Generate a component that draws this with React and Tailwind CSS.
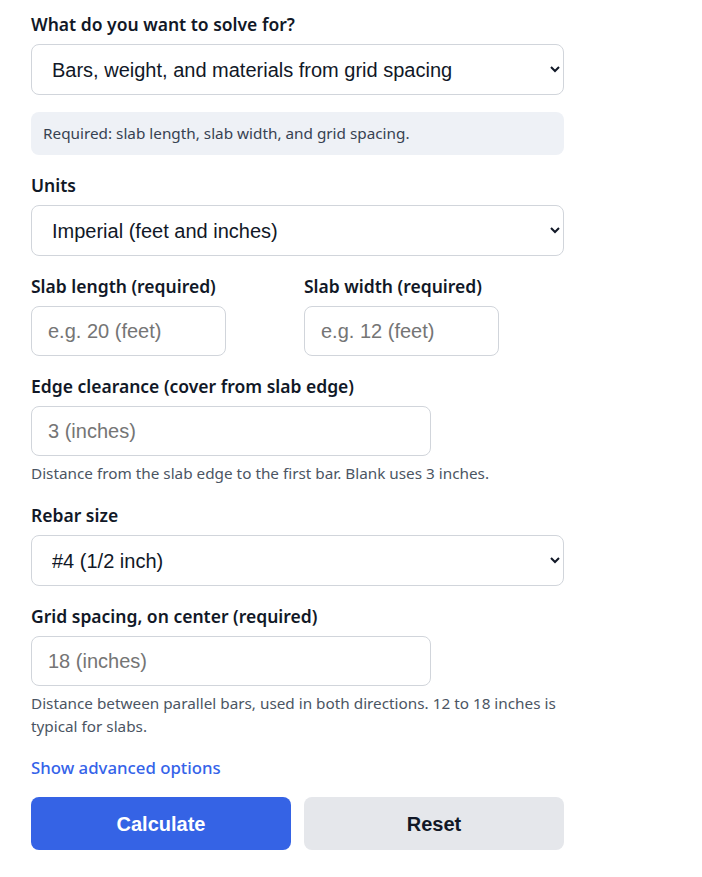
import { useState } from 'react'

const labelCls =
  'mb-2 block text-[17.5px] font-semibold leading-6 text-[#111827]'
const inputCls =
  'h-[50px] rounded-lg border border-[#d1d5db] bg-white px-4 text-[20px] text-[#111827] placeholder:text-[#757575] outline-none font-["Liberation_Sans",Arial,sans-serif]'
const selectCls =
  'h-[51px] w-full rounded-lg border border-[#d1d5db] bg-white px-4 text-[20px] text-[#111827] outline-none font-["Liberation_Sans",Arial,sans-serif]'
const helpCls = 'mt-[6px] text-[15.3px] leading-[23px] text-[#4b5563]'

const App = () => {
  const [solveFor, setSolveFor] = useState('grid')
  const [units, setUnits] = useState('imperial')
  const [rebar, setRebar] = useState('4')

  return (
    <div className='w-[595px] bg-white px-[31px] pt-3 pb-7 font-["Noto_Sans",sans-serif]'>
      <form className="flex flex-col" onSubmit={(e) => e.preventDefault()}>
        <label className={labelCls}>What do you want to solve for?</label>
        <select
          className={selectCls}
          value={solveFor}
          onChange={(e) => setSolveFor(e.target.value)}
        >
          <option value="grid">Bars, weight, and materials from grid spacing</option>
          <option value="count">Grid spacing from bar count</option>
        </select>

        <div className="mt-[17px] rounded-lg bg-[#eef1f6] px-3 py-3 text-[15.3px] leading-[19px] text-[#374151]">
          Required: slab length, slab width, and grid spacing.
        </div>

        <div className="mt-[18px]">
          <label className={labelCls}>Units</label>
          <select
            className={selectCls}
            value={units}
            onChange={(e) => setUnits(e.target.value)}
          >
            <option value="imperial">Imperial (feet and inches)</option>
            <option value="metric">Metric (meters and millimeters)</option>
          </select>
        </div>

        <div className="mt-[18px] grid grid-cols-2 gap-[13px]">
          <div>
            <label className={labelCls}>Slab length (required)</label>
            <input className={`${inputCls} w-[195px]`} placeholder="e.g. 20 (feet)" />
          </div>
          <div>
            <label className={labelCls}>Slab width (required)</label>
            <input className={`${inputCls} w-[195px]`} placeholder="e.g. 12 (feet)" />
          </div>
        </div>

        <div className="mt-[18px]">
          <label className={labelCls}>Edge clearance (cover from slab edge)</label>
          <input className={`${inputCls} w-[400px]`} placeholder="3 (inches)" />
          <p className={helpCls}>
            Distance from the slab edge to the first bar. Blank uses 3 inches.
          </p>
        </div>

        <div className="mt-[18px]">
          <label className={labelCls}>Rebar size</label>
          <select
            className={selectCls}
            value={rebar}
            onChange={(e) => setRebar(e.target.value)}
          >
            <option value="3">#3 (3/8 inch)</option>
            <option value="4">#4 (1/2 inch)</option>
            <option value="5">#5 (5/8 inch)</option>
          </select>
        </div>

        <div className="mt-[18px]">
          <label className={labelCls}>Grid spacing, on center (required)</label>
          <input className={`${inputCls} w-[400px]`} placeholder="18 (inches)" />
          <p className={helpCls}>
            Distance between parallel bars, used in both directions. 12 to 18
            inches is typical for slabs.
          </p>
        </div>

        <button
          type="button"
          className="mt-[18px] self-start text-[16.8px] font-medium leading-6 text-[#3563e9]"
        >
          Show advanced options
        </button>

        <div className="mt-[17px] grid grid-cols-2 gap-[13px]">
          <button
            type="submit"
            className='h-[53px] rounded-lg bg-[#3563e5] text-[20px] font-bold text-white font-["Liberation_Sans",Arial,sans-serif]'
          >
            Calculate
          </button>
          <button
            type="reset"
            className='h-[53px] rounded-lg bg-[#e5e7eb] text-[20px] font-bold text-[#111827] font-["Liberation_Sans",Arial,sans-serif]'
          >
            Reset
          </button>
        </div>
      </form>
    </div>
  )
}

export default App
